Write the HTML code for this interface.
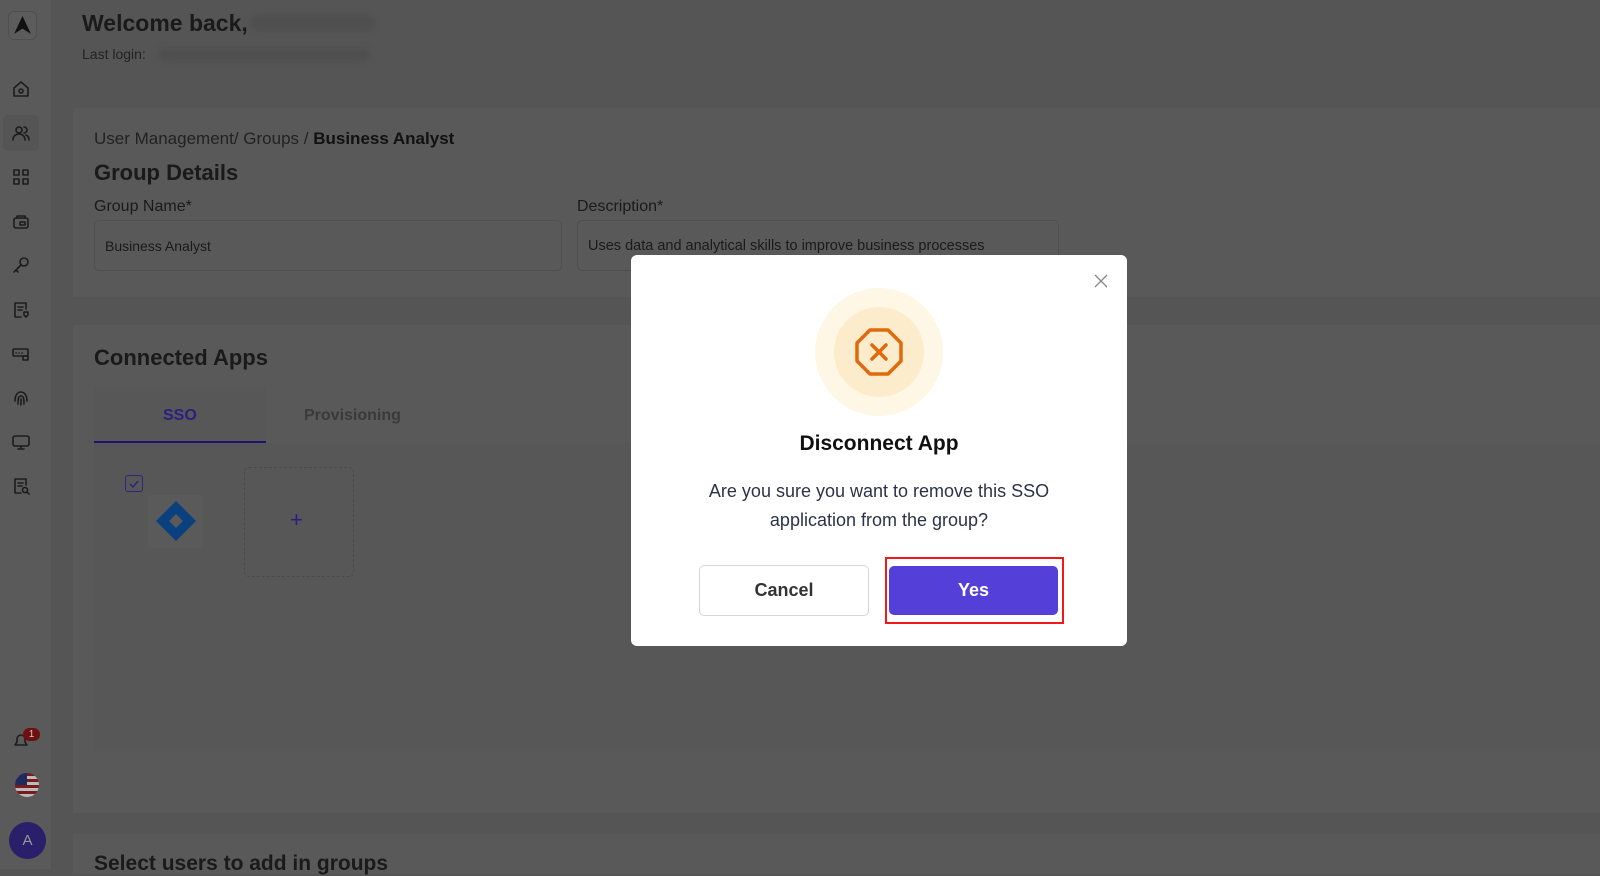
<!DOCTYPE html>
<html><head><meta charset="utf-8"><style>
*{box-sizing:border-box;margin:0;padding:0}
body{width:1600px;height:869px;overflow:hidden;background:#555;font-family:"Liberation Sans",sans-serif;position:relative}
.abs{position:absolute}
.side{left:0;top:0;width:52px;height:869px;background:#5a5a5a;border-right:1px solid #535353}
.ic{position:absolute;left:11px;width:20px;height:20px}
.ic svg{width:20px;height:20px;fill:none;stroke:#1c1c1c;stroke-width:1.6;stroke-linecap:round;stroke-linejoin:round}
.card{background:#595959;left:73px;right:0}
.t{position:absolute;white-space:nowrap;color:#1a1a1a}
.blur{position:absolute;background:#4f4f4f;border-radius:10px;filter:blur(3px)}
.inp{position:absolute;border:1px solid #4f4f4f;border-radius:5px;height:51px;top:220px}
</style></head><body>
<div class="abs side">
 <div class="abs" style="left:8px;top:11px;width:29px;height:29px;border:1px solid #4f4f4f;border-radius:6px;background:#5c5c5c"></div>
 <svg class="abs" style="left:12px;top:15px" width="21" height="21" viewBox="0 0 20 20"><path d="M10 1 L18 18 L10 13 L2 18 Z" fill="#111"/></svg>
 <div class="abs" style="left:3px;top:115px;width:36px;height:36px;background:#555;border-radius:5px"></div>
 <div class="ic" style="top:79px"><svg viewBox="0 0 20 20"><path d="M3 9 L10 3 L17 9 V17 H3 Z"/><circle cx="10" cy="12" r="2"/></svg></div>
 <div class="ic" style="top:123px"><svg viewBox="0 0 20 20"><circle cx="8" cy="7" r="3"/><path d="M2 17c0-4 3-6 6-6s6 2 6 6M13 4a3 3 0 010 6M15 12c2 1 3 3 3 5"/></svg></div>
 <div class="ic" style="top:167px"><svg viewBox="0 0 20 20"><rect x="3" y="3" width="5" height="5"/><rect x="12" y="3" width="5" height="5"/><rect x="3" y="12" width="5" height="5"/><rect x="12" y="12" width="5" height="5"/></svg></div>
 <div class="ic" style="top:211px"><svg viewBox="0 0 20 20"><rect x="3" y="7" width="14" height="10" rx="2"/><path d="M6 7V5h8v2"/><rect x="9" y="11" width="5" height="3"/></svg></div>
 <div class="ic" style="top:255px"><svg viewBox="0 0 20 20"><circle cx="13" cy="7" r="4"/><path d="M10 10 L3 17 M5 15 L7 17"/></svg></div>
 <div class="ic" style="top:300px"><svg viewBox="0 0 20 20"><path d="M15 9V3H4v14h6M7 7h5M7 10h4"/><path d="M13 12h4v3l-2 2-2-2z"/></svg></div>
 <div class="ic" style="top:344px"><svg viewBox="0 0 20 20"><rect x="2" y="5" width="15" height="7" rx="1"/><rect x="12" y="12" width="5" height="4"/><path d="M5 9h.1M8 9h.1M11 9h.1"/></svg></div>
 <div class="ic" style="top:388px"><svg viewBox="0 0 20 20"><path d="M4 13c0-5 2-9 6-9s6 4 6 9M7 16c0-4 0-8 3-8s3 4 3 8M10 11v6"/></svg></div>
 <div class="ic" style="top:432px"><svg viewBox="0 0 20 20"><rect x="2" y="4" width="16" height="10" rx="2"/><path d="M10 14v3M7 17h6"/></svg></div>
 <div class="ic" style="top:476px"><svg viewBox="0 0 20 20"><path d="M15 9V3H4v14h6M7 7h5M7 10h4"/><circle cx="14" cy="14" r="2.5"/><path d="M16 16l2 2"/></svg></div>
 <div class="ic" style="top:731px"><svg viewBox="0 0 20 20"><path d="M4 14h12l-2-3V8a4 4 0 00-8 0v3z"/></svg></div>
 <div class="abs" style="left:23px;top:728px;width:17px;height:13px;border-radius:7px;background:#6e1010;color:#ccc;font-size:10px;text-align:center;line-height:13px">1</div>
 <div class="abs" style="left:15px;top:773px;width:24px;height:24px;border-radius:50%;background:repeating-linear-gradient(#7a1a1a 0 3px,#bbb 3px 6px);overflow:hidden"><div style="width:12px;height:12px;background:#1e2a5a"></div></div>
 <div class="abs" style="left:9px;top:822px;width:37px;height:37px;border-radius:50%;background:#2a1f6a;color:#999;font-size:15px;text-align:center;line-height:37px">A</div>
</div>
<div class="t" style="left:82px;top:10px;font-size:23px;font-weight:bold">Welcome back,</div>
<div class="blur" style="left:250px;top:15px;width:125px;height:16px"></div>
<div class="t" style="left:82px;top:46px;font-size:14px;color:#222">Last login:</div>
<div class="blur" style="left:158px;top:48px;width:212px;height:13px"></div>
<div class="abs" style="left:82px;right:0;top:84px;height:1px;background:#545454"></div>
<div class="abs" style="left:52px;right:0;top:85px;height:23px;background:#555"></div>
<div class="abs card" style="top:108px;height:189px"></div>
<div class="t" style="left:94px;top:129px;font-size:17px;color:#222">User Management/ Groups / <b style="color:#111">Business Analyst</b></div>
<div class="t" style="left:94px;top:160px;font-size:22px;font-weight:bold">Group Details</div>
<div class="t" style="left:94px;top:198px;font-size:16px">Group Name*</div>
<div class="t" style="left:577px;top:198px;font-size:16px">Description*</div>
<div class="inp" style="left:94px;width:468px"></div>
<div class="inp" style="left:577px;width:482px"></div>
<div class="t" style="left:105px;top:238px;font-size:14px">Business Analyst</div>
<div class="t" style="left:588px;top:238px;font-size:14.5px">Uses data and analytical skills to improve business processes</div>
<div class="abs card" style="top:325px;height:488px"></div>
<div class="t" style="left:94px;top:345px;font-size:22px;font-weight:bold">Connected Apps</div>
<div class="abs" style="left:94px;top:388px;width:172px;height:55px;background:#575757;border-bottom:2px solid #1e1470"></div>
<div class="abs" style="left:266px;top:388px;width:1334px;height:55px;background:#595959"></div>
<div class="t" style="left:163px;top:407px;font-size:16px;font-weight:bold;color:#2a1f80">SSO</div>
<div class="t" style="left:304px;top:407px;font-size:16px;font-weight:bold;color:#3a3a3a">Provisioning</div>
<div class="abs" style="left:94px;top:443px;right:0;height:307px;background:#575757"></div>
<div class="abs" style="left:125px;top:475px;width:18px;height:17px;border:1px solid #2f2580;border-radius:3px"></div>
<svg class="abs" style="left:128px;top:478px" width="12" height="11" viewBox="0 0 12 11"><path d="M2 6l3 3 5-6" fill="none" stroke="#2f2580" stroke-width="1.5"/></svg>
<div class="abs" style="left:148px;top:495px;width:55px;height:53px;background:#5a5a5a"></div>
<svg class="abs" style="left:155px;top:500px" width="42" height="42" viewBox="0 0 42 42"><path d="M21 1 L41 21 L21 41 L1 21 Z" fill="#0a3f80"/><path d="M21 14 L28 21 L21 28 L14 21 Z" fill="#5a5a5a"/></svg>
<div class="abs" style="left:244px;top:467px;width:110px;height:110px;border:1px dashed #4a4a4a;border-radius:5px"></div>
<div class="t" style="left:290px;top:507px;font-size:22px;color:#2a1f80">+</div>
<div class="abs card" style="top:834px;height:40px"></div>
<div class="t" style="left:94px;top:852px;font-size:21px;font-weight:bold">Select users to add in groups</div>

<div class="abs" style="left:631px;top:255px;width:496px;height:391px;background:#fff;border-radius:6px"></div>
<svg class="abs" style="left:1094px;top:274px" width="14" height="14" viewBox="0 0 14 14"><path d="M1 1L13 13M13 1L1 13" stroke="#888" stroke-width="1.3"/></svg>
<div class="abs" style="left:815px;top:288px;width:128px;height:128px;border-radius:50%;background:#fef7e6"></div>
<div class="abs" style="left:834px;top:307px;width:90px;height:90px;border-radius:50%;background:#fdeccb"></div>
<svg class="abs" style="left:854px;top:327px" width="50" height="50" viewBox="0 0 50 50"><path d="M16 3H34L47 16V34L34 47H16L3 34V16Z" fill="none" stroke="#e0690c" stroke-width="3.5" stroke-linejoin="round"/><path d="M18 18L32 32M32 18L18 32" stroke="#e0690c" stroke-width="3.5" stroke-linecap="round"/></svg>
<div class="t" style="left:631px;width:496px;text-align:center;top:432px;font-size:21px;font-weight:bold;color:#111">Disconnect App</div>
<div class="t" style="left:631px;width:496px;text-align:center;top:477px;font-size:18px;line-height:29px;color:#2a3348;white-space:normal">Are you sure you want to remove this SSO<br>application from the group?</div>
<div class="abs" style="left:699px;top:565px;width:170px;height:51px;border:1px solid #d5d5dc;border-radius:5px;text-align:center;line-height:49px;font-size:18px;font-weight:bold;color:#333">Cancel</div>
<div class="abs" style="left:885px;top:557px;width:179px;height:67px;border:2px solid #f01818"></div>
<div class="abs" style="left:889px;top:566px;width:169px;height:49px;background:#5440d8;border-radius:5px;text-align:center;line-height:49px;font-size:18px;font-weight:bold;color:#fff">Yes</div>
</body></html>
